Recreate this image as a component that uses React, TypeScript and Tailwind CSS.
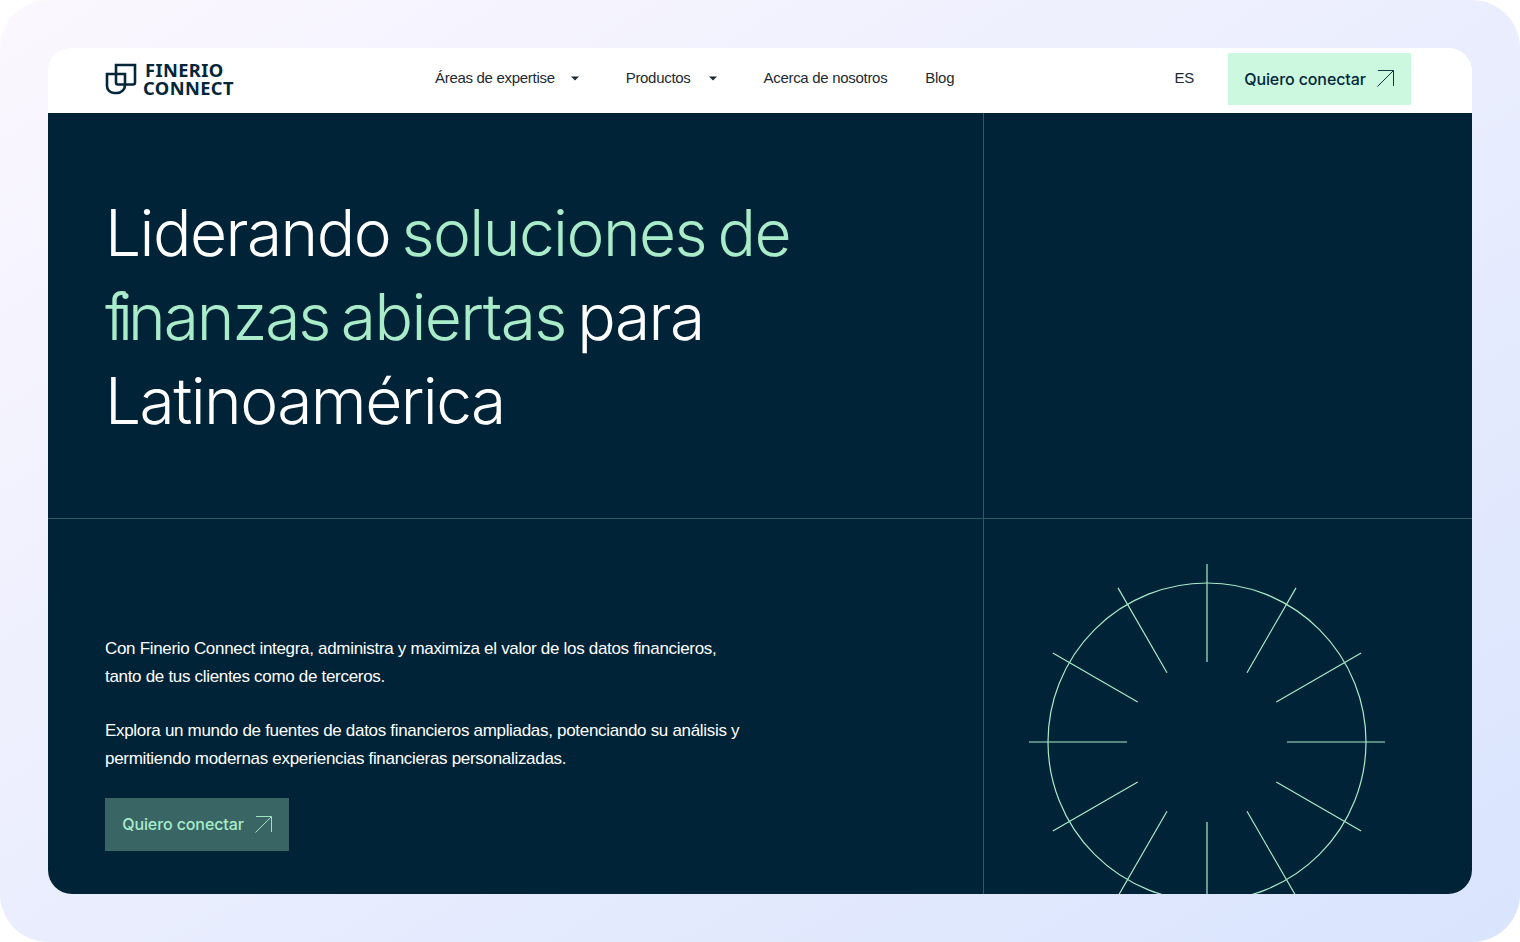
import React from 'react';

const rays = [0, 30, 60, 90, 120, 150, 180, 210, 240, 270, 300, 330];

const ArrowIcon = ({ className }: { className?: string }) => (
  <svg viewBox="0 0 18 18" fill="none" stroke="currentColor" strokeWidth="1" className={className}>
    <path d="M0.5 17.5L17 1M1 0.5H17.5V17" />
  </svg>
);

const Caret = () => (
  <svg viewBox="0 0 8 5" className="h-[5px] w-2 fill-current">
    <path d="M0 0.5h8L4 4.5z" />
  </svg>
);

const Logo = () => (
  <div className="flex w-[128px] items-center gap-[6px]">
    <svg viewBox="0 0 32 32" fill="none" stroke="#04263a" strokeWidth="2.6" className="h-8 w-8 shrink-0">
      <path d="M11 11V2h19v17.5a2 2 0 0 1-2 2H20" />
      <path d="M2 11h18v11a8 8 0 0 1-8 8H9a7 7 0 0 1-7-7z" />
      <path d="M11 11v8.5a2 2 0 0 0 2 2h7" />
    </svg>
    <div className="text-[18.3px] font-bold leading-[18px] tracking-[0.4px] text-[#04263a] font-['Noto_Sans',sans-serif]">
      <div className="pl-[2px]">FINERIO</div>
      <div>CONNECT</div>
    </div>
  </div>
);

const Burst = () => (
  <svg viewBox="0 0 360 360" fill="none" stroke="#a8ecc9" strokeWidth="1.2" className="h-[360px] w-[360px] shrink-0">
    <circle cx="180" cy="180" r="159" />
    {rays.map((deg) => {
      const a = (deg * Math.PI) / 180;
      return (
        <line
          key={deg}
          x1={180 + 80 * Math.cos(a)}
          y1={180 + 80 * Math.sin(a)}
          x2={180 + 178 * Math.cos(a)}
          y2={180 + 178 * Math.sin(a)}
        />
      );
    })}
  </svg>
);

export default function App() {
  return (
    <div className="h-[942px] w-[1520px] overflow-hidden rounded-[48px] bg-gradient-to-br from-[#fbf7fe] to-[#d9e4fd] p-12 font-['Liberation_Sans',sans-serif]">
      <div className="flex h-[846px] flex-col overflow-hidden rounded-[24px] bg-white">
        {/* Nav */}
        <header className="flex h-[65px] shrink-0 items-center bg-white pb-[3px] pl-[57px] pr-[61px] text-[15px] tracking-[-0.3px] text-[#1d2a33]">
          <Logo />
          <nav className="-mt-[2px] ml-[202px] flex items-center">
            <a className="flex items-center gap-[16px]">
              Áreas de expertise <Caret />
            </a>
            <a className="ml-[47px] flex items-center gap-[18px]">
              Productos <Caret />
            </a>
            <a className="ml-[47px]">Acerca de nosotros</a>
            <a className="ml-[38px]">Blog</a>
          </nav>
          <span className="-mt-[2px] ml-auto mr-[34px]">ES</span>
          <a className="flex h-[52px] w-[183px] items-center justify-center gap-[11px] bg-[#ccf8df] pb-[1px] pr-[1px] font-['Inter',sans-serif] text-[16px] font-medium tracking-[-0.1px] text-[#04263a]">
            Quiero conectar
            <ArrowIcon className="h-[17px] w-[17px]" />
          </a>
        </header>

        {/* Top row */}
        <section className="grid h-[406px] shrink-0 grid-cols-[936px_1fr] border-b border-[#2d5b64] bg-[#012337]">
          <div className="border-r border-[#2d5b64] pl-[57px] pt-[78px]">
            <h1 className="w-[800px] font-['Inter',sans-serif] text-[64px] font-light leading-[84px] tracking-[-1.55px] [word-spacing:-5px] text-white">
              Liderando{' '}
              <span className="text-[#a8ecc9]">
                soluciones de <span className="tracking-[-9px]">f</span>
                <span className="tracking-[-5px]">i</span>
                <span className="tracking-[-2px]">nanzas</span> abiertas
              </span>{' '}
              para Latinoamérica
            </h1>
          </div>
          <div />
        </section>

        {/* Bottom row */}
        <section className="grid min-h-0 flex-1 grid-cols-[936px_1fr] bg-[#012337]">
          <div className="border-r border-[#2d5b64] pl-[57px] pt-[116px] text-[17px] leading-[28px] tracking-[-0.31px] text-white">
            <p>
              Con Finerio Connect integra, administra y maximiza el valor de los datos financieros,
              <br />
              tanto de tus clientes como de terceros.
            </p>
            <p className="mt-[26px]">
              Explora un mundo de fuentes de datos financieros ampliadas, potenciando su análisis y
              <br />
              permitiendo modernas experiencias financieras personalizadas.
            </p>
            <a className="mt-[25px] flex h-[53px] w-[184px] items-center justify-center gap-[11px] bg-[#396565] pb-[1px] font-['Inter',sans-serif] text-[16px] font-medium tracking-[-0.1px] text-[#a8ecc9]">
              Quiero conectar
              <ArrowIcon className="h-[17px] w-[17px]" />
            </a>
          </div>
          <div className="overflow-hidden pl-[43px] pt-[43px]">
            <Burst />
          </div>
        </section>
      </div>
    </div>
  );
}
